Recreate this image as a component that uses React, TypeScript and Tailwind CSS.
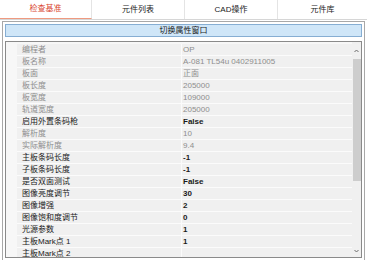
import React from "react";

type Row = { label: string; value: string; kind: "ro" | "norm" };

const rows: Row[] = [
  { label: "编程者", value: "OP", kind: "ro" },
  { label: "板名称", value: "A-081 TL54u 0402911005", kind: "ro" },
  { label: "板面", value: "正面", kind: "ro" },
  { label: "板长度", value: "205000", kind: "ro" },
  { label: "板宽度", value: "109000", kind: "ro" },
  { label: "轨道宽度", value: "205000", kind: "ro" },
  { label: "启用外置条码枪", value: "False", kind: "norm" },
  { label: "解析度", value: "10", kind: "ro" },
  { label: "实际解析度", value: "9.4", kind: "ro" },
  { label: "主板条码长度", value: "-1", kind: "norm" },
  { label: "子板条码长度", value: "-1", kind: "norm" },
  { label: "是否双面测试", value: "False", kind: "norm" },
  { label: "图像亮度调节", value: "30", kind: "norm" },
  { label: "图像增强", value: "2", kind: "norm" },
  { label: "图像饱和度调节", value: "0", kind: "norm" },
  { label: "光源参数", value: "1", kind: "norm" },
  { label: "主板Mark点 1", value: "1", kind: "norm" },
  { label: "主板Mark点 2", value: "", kind: "norm" },
];

const tabs = ["检查基准", "元件列表", "CAD操作", "元件库"];

export default function App() {
  return (
    <div
      className="w-[367px] h-[260px] bg-white overflow-hidden text-[8px] leading-none text-[#1a1a1a]"
      style={{ fontFamily: '"Liberation Sans", "Noto Sans CJK SC", sans-serif' }}
    >
      {/* Tabs */}
      <div className="flex h-[20px] border-b border-[#d6d6d6]">
        {tabs.map((t, i) => (
          <div
            key={t}
            className={
              i === 0
                ? "w-[92px] flex items-center justify-center text-[#d9452e] border-b border-[#ef9a80] border-r border-r-[#e4e4e4]"
                : i === 3
                ? "flex-1 flex items-center justify-center"
                : "w-[93px] flex items-center justify-center border-r border-[#e4e4e4]"
            }
          >
            {t}
          </div>
        ))}
      </div>

      {/* Panel */}
      <div className="mx-[2px] mt-[1px] h-[240px] border border-[#a8a8a8] px-[2px] pt-[2px]">
        <div className="h-[13px] border border-[#86aed3] bg-[#cfe6f8] flex items-center justify-center">
          切换属性窗口
        </div>

        <div className="mt-[4px] h-[217px] border border-[#8a8a8a] flex overflow-hidden">
          <div className="flex-1 flex flex-col pt-[2px] bg-[#f7f7f7]">
            {rows.map((r) => (
              <div key={r.label} className="flex h-[12px] shrink-0">
                <div className="w-[11px] shrink-0 bg-[#f7f7f7]" />
                <div
                  className={
                    "w-[165px] shrink-0 flex items-center pl-[5px] bg-[#f0f0f0] border-b border-[#fbfbfb] border-r border-r-[#fbfbfb] " +
                    (r.kind === "ro" ? "text-[#8e8e8e]" : "text-[#1a1a1a]")
                  }
                >
                  {r.label}
                </div>
                <div
                  className={
                    "flex-1 flex items-center pl-[1px] bg-[#f0f0f0] border-b border-[#fbfbfb] " +
                    (r.kind === "ro" ? "text-[#8e8e8e]" : "text-[#1a1a1a] font-bold")
                  }
                >
                  {r.value}
                </div>
              </div>
            ))}
          </div>
          {/* Scrollbar */}
          <div className="w-[9px] shrink-0 bg-[#f0f0f0] flex flex-col items-center">
            <div className="h-[17px] w-full flex items-center justify-center">
              <svg width="5" height="4" viewBox="0 0 5 4">
                <path d="M0.5 3 L2.5 1 L4.5 3" stroke="#6a6a6a" strokeWidth="1" fill="none" />
              </svg>
            </div>
            <div className="w-[8px] h-[122px] bg-[#cdcdcd]" />
            <div className="flex-1" />
            <div className="h-[12px] w-full flex items-center justify-center">
              <svg width="5" height="4" viewBox="0 0 5 4">
                <path d="M0.5 1 L2.5 3 L4.5 1" stroke="#6a6a6a" strokeWidth="1" fill="none" />
              </svg>
            </div>
          </div>
        </div>
      </div>
    </div>
  );
}
